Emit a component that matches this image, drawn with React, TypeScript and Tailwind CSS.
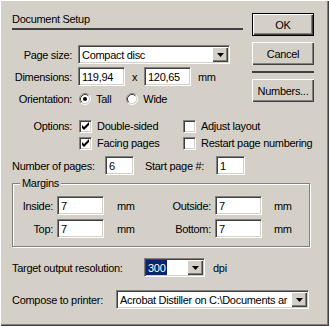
import type { ReactNode } from "react";

const sunken =
  "border border-t-[#808080] border-l-[#808080] border-b-white border-r-white bg-white shadow-[inset_1px_1px_0_#404040,inset_-1px_-1px_0_#d4d0c8]";
const raised =
  "bg-[#d4d0c8] shadow-[inset_1px_1px_0_#fff,inset_-1px_-1px_0_#404040,inset_-2px_-2px_0_#808080]";

function TextBox({ className = "", value }: { className?: string; value: string }) {
  return (
    <div className={`${sunken} flex h-[19px] items-center pl-[3px] ${className}`}>
      {value}
    </div>
  );
}

function DropArrow() {
  return (
    <div className={`${raised} flex h-full w-[16px] shrink-0 items-center justify-center`}>
      <svg width="7" height="4" viewBox="0 0 7 4" aria-hidden="true">
        <path d="M0 0h7L3.5 4z" fill="#000" />
      </svg>
    </div>
  );
}

function Select({ className = "", children }: { className?: string; children: ReactNode }) {
  return (
    <div className={`${sunken} flex h-[19px] p-px ${className}`}>
      <div className="flex min-w-0 flex-1 items-center overflow-hidden pl-[2px]">
        {children}
      </div>
      <DropArrow />
    </div>
  );
}

function Button({
  children,
  isDefault = false,
  className = "",
}: {
  children: ReactNode;
  isDefault?: boolean;
  className?: string;
}) {
  if (isDefault) {
    return (
      <div className={`h-[23px] w-[62px] border border-black ${className}`}>
        <div className={`${raised} flex h-full items-center justify-center`}>{children}</div>
      </div>
    );
  }
  return (
    <div className={`${raised} flex h-[23px] w-[62px] items-center justify-center ${className}`}>
      {children}
    </div>
  );
}

function Radio({ checked = false, className = "" }: { checked?: boolean; className?: string }) {
  return (
    <svg width="12" height="12" viewBox="0 0 12 12" className={`shrink-0 ${className}`} aria-hidden="true">
      <circle cx="6" cy="6" r="4.5" fill="#fff" />
      <path d="M9.89 2.11A5.5 5.5 0 0 0 2.11 9.89" stroke="#808080" fill="none" />
      <path d="M2.11 9.89A5.5 5.5 0 0 0 9.89 2.11" stroke="#fff" fill="none" />
      <path d="M9.18 2.82A4.5 4.5 0 0 0 2.82 9.18" stroke="#404040" fill="none" />
      <path d="M2.82 9.18A4.5 4.5 0 0 0 9.18 2.82" stroke="#d4d0c8" fill="none" />
      {checked && <circle cx="6" cy="6" r="2" fill="#000" />}
    </svg>
  );
}

function Check({ checked = false, label }: { checked?: boolean; label: string }) {
  return (
    <div className="flex h-[16px] items-center">
      <div className={`${sunken} h-[13px] w-[13px] shrink-0`}>
        {checked && (
          <svg width="11" height="11" viewBox="1 1 11 11" aria-hidden="true">
            <path d="M3 5l2 2 5-5v3l-5 5-2-2z" fill="#000" />
          </svg>
        )}
      </div>
      <span className="ml-[5px]">{label}</span>
    </div>
  );
}

export default function App() {
  return (
    <div className="h-[326px] w-[329px] whitespace-nowrap bg-[#d4d0c8] pl-[12px] pt-[12px] font-['Liberation_Sans',Arial,sans-serif] text-[11px] leading-[14px] tracking-[-0.3px] text-black shadow-[inset_1px_1px_0_#fff,inset_-1px_-1px_0_#404040,inset_-2px_-2px_0_#808080]">
      {/* Title, page size, dimensions, orientation + buttons */}
      <div className="flex">
        <div className="w-[231px]">
          <div className="h-[14px]">Document Setup</div>
          <div className="mt-[2px] h-[2px] bg-[#404040]" />
          <div className="mt-[15px] flex h-[19px] items-center">
            <span className="w-[60px] text-right">Page size:</span>
            <Select className="ml-[6px] w-[152px]">Compact disc</Select>
          </div>
          <div className="mt-[3px] flex h-[19px] items-center">
            <span className="w-[60px] text-right">Dimensions:</span>
            <TextBox className="ml-[6px] w-[47px]" value="119,94" />
            <span className="w-[19px] text-center">x</span>
            <TextBox className="w-[47px]" value="120,65" />
            <span className="ml-[7px]">mm</span>
          </div>
          <div className="mt-[6px] flex h-[14px] items-center">
            <span className="w-[60px] text-right">Orientation:</span>
            <Radio className="ml-[7px]" checked />
            <span className="ml-[5px]">Tall</span>
            <Radio className="ml-[15px]" />
            <span className="ml-[5px]">Wide</span>
          </div>
        </div>
        <div className="ml-[9px] w-[62px] pt-px">
          <Button isDefault>OK</Button>
          <Button className="mt-[6px]">Cancel</Button>
          <div className="mt-[6px] h-[2px] bg-[#404040]" />
          <Button className="mt-[6px]">Numbers...</Button>
        </div>
      </div>

      {/* Options */}
      <div className="mt-[12px] flex">
        <span className="h-[16px] w-[60px] text-right leading-[16px]">Options:</span>
        <div className="ml-[7px] grid grid-cols-[104px_auto] gap-y-px">
          <Check checked label="Double-sided" />
          <Check label="Adjust layout" />
          <Check checked label="Facing pages" />
          <Check label="Restart page numbering" />
        </div>
      </div>

      {/* Pages */}
      <div className="mt-[5px] flex h-[19px] items-center">
        <span className="w-[93px]">Number of pages:</span>
        <TextBox className="w-[29px]" value="6" />
        <span className="ml-[11px] w-[71px]">Start page #:</span>
        <TextBox className="w-[29px]" value="1" />
      </div>

      {/* Margins group */}
      <div className="relative mt-[8px] w-[298px] border border-[#808080] pb-[8px] pt-[12px] shadow-[1px_1px_0_#fff,inset_1px_1px_0_#fff]">
        <span className="absolute -top-[8px] left-[7px] bg-[#d4d0c8] px-[2px]">Margins</span>
        <div className="flex h-[19px] items-center">
          <span className="w-[40px] text-right">Inside:</span>
          <TextBox className="ml-[4px] w-[47px]" value="7" />
          <span className="ml-[13px] w-[55px]">mm</span>
          <span className="w-[39px] text-right">Outside:</span>
          <TextBox className="ml-[4px] w-[47px]" value="7" />
          <span className="ml-[12px]">mm</span>
        </div>
        <div className="mt-[4px] flex h-[19px] items-center">
          <span className="w-[40px] text-right">Top:</span>
          <TextBox className="ml-[4px] w-[47px]" value="7" />
          <span className="ml-[13px] w-[55px]">mm</span>
          <span className="w-[39px] text-right">Bottom:</span>
          <TextBox className="ml-[4px] w-[47px]" value="7" />
          <span className="ml-[12px]">mm</span>
        </div>
      </div>

      {/* Resolution */}
      <div className="mt-[11px] flex h-[19px] items-center">
        <span className="w-[132px]">Target output resolution:</span>
        <Select className="w-[61px]">
          <span className="-ml-[2px] flex h-full items-center bg-[#0a246a] px-[2px] text-white">300</span>
        </Select>
        <span className="ml-[8px]">dpi</span>
      </div>

      {/* Printer */}
      <div className="mt-[13px] flex h-[19px] items-center">
        <span className="w-[104px]">Compose to printer:</span>
        <Select className="w-[193px]">Acrobat Distiller on C:\Documents ar</Select>
      </div>
    </div>
  );
}
